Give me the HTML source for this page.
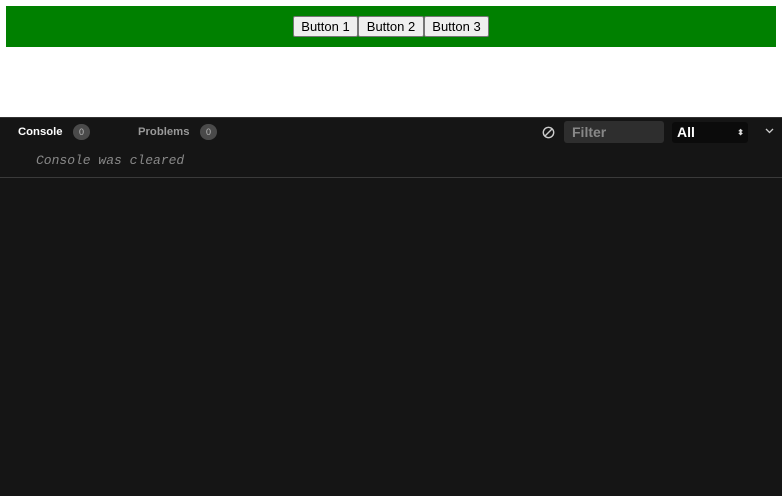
<!DOCTYPE html>
<html><head><meta charset="utf-8"><style>
*{box-sizing:border-box;margin:0;padding:0}
body{width:782px;height:496px;background:#151515;font-family:"Liberation Sans",sans-serif;overflow:hidden;position:relative}
#top{position:absolute;left:0;top:0;width:782px;height:117px;background:#fff}
#green{position:absolute;left:6px;top:6px;width:770px;height:41px;background:#008000}
.btn{position:absolute;top:16px;height:21px;background:#efefef;border:1px solid #767676;border-radius:2px;font-size:13px;color:#000;line-height:19px;text-align:center}
#bar{position:absolute;left:0;top:117px;width:782px;height:30px;background:#151515;border-top:1px solid #333}
.tab{position:absolute;top:126px;font-size:11.3px;font-weight:bold}
.badge{position:absolute;top:124px;width:17px;height:16px;border-radius:8px;background:#4a4a4a;color:#bbb;font-size:9px;text-align:center;line-height:16px}
#filter{position:absolute;left:564px;top:121px;width:100px;height:22px;background:#2e2e2e;border-radius:3px;color:#888;font-size:14px;font-weight:bold;padding-left:8px;line-height:22px}
#all{position:absolute;left:672px;top:122px;width:76px;height:21px;background:#0b0b0b;border-radius:3px;color:#fff;font-size:14px;font-weight:bold;padding-left:5px;line-height:21px}
#msg{position:absolute;left:36px;top:153px;font-family:"Liberation Mono",monospace;font-style:italic;font-size:13px;color:#888}
#line{position:absolute;left:0;top:177px;width:782px;height:1px;background:#3a3a3a}
</style></head><body>
<div id="top"><div id="green"></div>
<div class="btn" style="left:293px;width:65px">Button 1</div>
<div class="btn" style="left:358px;width:66px">Button 2</div>
<div class="btn" style="left:424px;width:65px">Button 3</div>
</div>
<div id="bar"></div>
<div class="tab" style="left:18px;color:#fff">Console</div>
<div class="badge" style="left:73px">0</div>
<div class="tab" style="left:138px;color:#999">Problems</div>
<div class="badge" style="left:200px">0</div>
<svg style="position:absolute;left:542px;top:126px" width="13" height="13" viewBox="0 0 13 13"><circle cx="6.5" cy="6.5" r="5.2" fill="none" stroke="#ccc" stroke-width="1.4"/><line x1="3" y1="10" x2="10" y2="3" stroke="#ccc" stroke-width="1.4"/></svg>
<div id="filter">Filter</div>
<div id="all">All<span style="position:absolute;right:4px;top:0;font-size:8px;color:#ddd">&#x2B0D;</span></div>
<svg style="position:absolute;left:765px;top:128px" width="9" height="6" viewBox="0 0 9 6"><path d="M1 1l3.5 3.5L8 1" fill="none" stroke="#ccc" stroke-width="1.3"/></svg>
<div id="msg">Console was cleared</div>
<div id="line"></div>
</body></html>
